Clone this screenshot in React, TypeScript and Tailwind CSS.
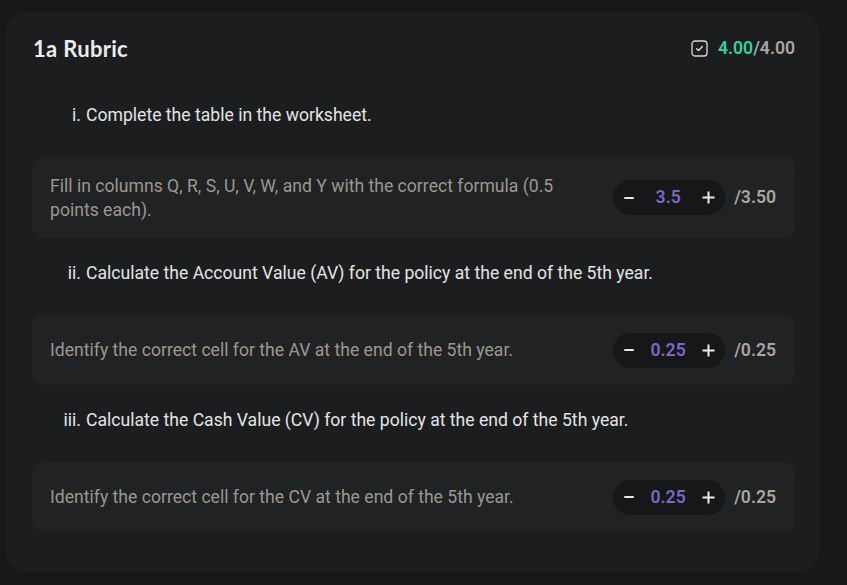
import type { ReactNode } from "react";

type RubricItem = {
  marker: string;
  title: string;
  detail: string;
  value: string;
  max: string;
};

const items: RubricItem[] = [
  {
    marker: "i.",
    title: "Complete the table in the worksheet.",
    detail:
      "Fill in columns Q, R, S, U, V, W, and Y with the correct formula (0.5 points each).",
    value: "3.5",
    max: "/3.50",
  },
  {
    marker: "ii.",
    title: "Calculate the Account Value (AV) for the policy at the end of the 5th year.",
    detail: "Identify the correct cell for the AV at the end of the 5th year.",
    value: "0.25",
    max: "/0.25",
  },
  {
    marker: "iii.",
    title: "Calculate the Cash Value (CV) for the policy at the end of the 5th year.",
    detail: "Identify the correct cell for the CV at the end of the 5th year.",
    value: "0.25",
    max: "/0.25",
  },
];

const Stepper = ({ value }: { value: string }) => (
  <div className="flex h-[35px] w-[112px] items-center justify-between rounded-full bg-[#161718] pl-[11px] pr-[10px]">
    <span className="h-[2px] w-[10px] rounded-full bg-[#e8e8e8]" />
    <span className="text-[17.6px] font-semibold text-[#7b68c2]">{value}</span>
    <svg width="13" height="13" viewBox="0 0 13 13">
      <path d="M6.5 0.5v12M0.5 6.5h12" stroke="#ececec" strokeWidth="2" />
    </svg>
  </div>
);

const Section = ({ item, children }: { item: RubricItem; children: ReactNode }) => (
  <div className="flex flex-col">
    {/* heading with right-aligned roman marker */}
    <div className="flex h-[24px] items-center text-[17.6px] leading-[24px] text-[#e4e4e4]">
      <span className="w-[54px] shrink-0 pr-[5px] text-right">{item.marker}</span>
      <span>{item.title}</span>
    </div>
    {children}
  </div>
);

const App = () => {
  return (
    <div
      className="min-h-[585px] w-full bg-[#17181a] pl-[6px] pr-[27px] pt-[12px] pb-[14px]"
      style={{ fontFamily: "Roboto, 'Liberation Sans', sans-serif" }}>
      <div className="rounded-[20px] bg-[#1c1d1f] pl-[26px] pr-[25px] pt-[24px] pb-[40px]">
        {/* header */}
        <div className="flex h-[24px] items-center justify-between">
          <h1
            className="pl-[1px] text-[22px] font-bold tracking-[0.3px] text-[#ececec]"
            style={{ fontFamily: "Lato, 'Noto Sans', sans-serif" }}>
            1a Rubric
          </h1>
          <div className="flex items-center gap-[10px] text-[17.6px] font-semibold">
            <svg width="17" height="17" viewBox="0 0 17 17" fill="none">
              <rect x="1" y="1" width="15" height="15" rx="3" stroke="#d8d8d8" strokeWidth="1.3" />
              <path d="M5.6 8.8l2 1.8 3.8-4" stroke="#d8d8d8" strokeWidth="1.4" strokeLinecap="round" strokeLinejoin="round" />
            </svg>
            <span>
              <span className="text-[#2fd3a0]">4.00</span>
              <span className="text-[#a9a59f]">/4.00</span>
            </span>
          </div>
        </div>

        <div className="mt-[43px] flex flex-col gap-[23px]">
          {items.map((item, idx) => (
            <Section item={item} key={item.marker}>
              <div
                className={`mt-[30px] flex items-center justify-between rounded-[12px] bg-[#212224] pl-[18px] pr-[19px] ${
                  idx === 0 ? "h-[81px]" : "h-[70px]"
                }`}>
                <p className="max-w-[524px] text-[17.6px] leading-[24px] text-[#9c978f]">{item.detail}</p>
                <div className="flex items-center gap-[9px]">
                  <Stepper value={item.value} />
                  <span className="text-[17.6px] font-semibold text-[#a9a59f]">{item.max}</span>
                </div>
              </div>
            </Section>
          ))}
        </div>
      </div>
    </div>
  );
};

export default App;
